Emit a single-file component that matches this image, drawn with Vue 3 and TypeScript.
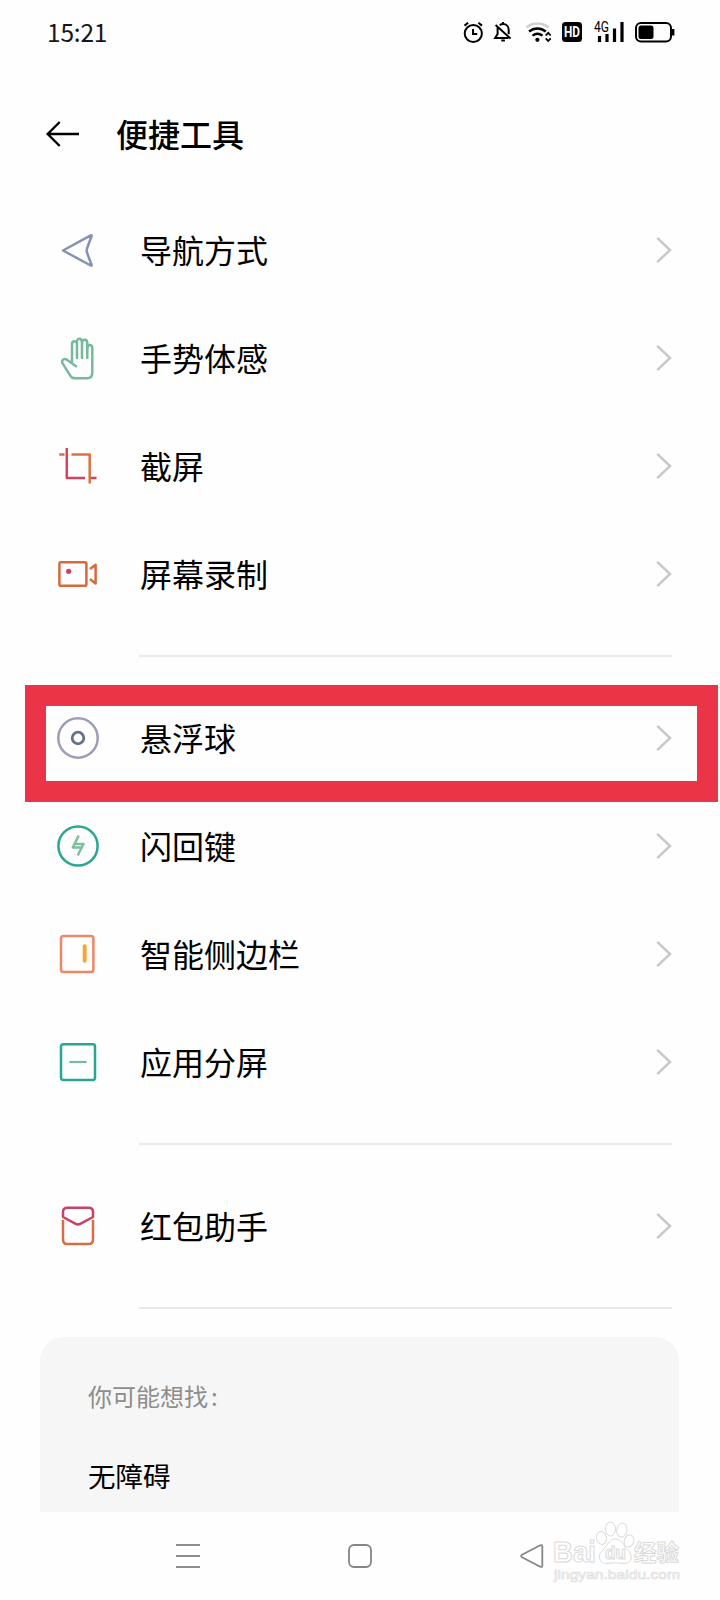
<script setup lang="ts">
interface Item {
  icon: string
  label: string
}

const groups: Item[][] = [
  [
    { icon: 'nav', label: '导航方式' },
    { icon: 'hand', label: '手势体感' },
    { icon: 'crop', label: '截屏' },
    { icon: 'record', label: '屏幕录制' },
  ],
  [
    { icon: 'orb', label: '悬浮球' },
    { icon: 'flash', label: '闪回键' },
    { icon: 'sidebar', label: '智能侧边栏' },
    { icon: 'split', label: '应用分屏' },
  ],
  [{ icon: 'packet', label: '红包助手' }],
]
</script>

<template>
  <div class="screen">
    <header class="status">
      <span class="time">15:21</span>
      <svg class="status-icons" viewBox="460 18 218 28" width="218" height="28" fill="none" stroke="#000" stroke-width="2">
        <circle cx="473.3" cy="33.5" r="8.6" />
        <path d="M473 29v5h4.2M464.5 25.6l3.6-2.8M482 25.6l-3.6-2.8" />
        <path d="M497.6 27.4V34l-2.5 4h13.4M499.8 25.3c1-.9 2-1.200 3.200-1.200 3.400 0 5.700 2.400 5.700 5.700v4.400M503 22v2.500M495.600 25l15 13.600M501.300 40.400h3.600" />
        <path d="M526.5 27.4c6.400-5.200 15.600-5.200 22 0" stroke="#d0d0d0" stroke-width="2.6" />
        <path d="M529 31.5c5-4.100 11.800-4.100 16.800 0" stroke-width="2.4" />
        <path d="M532.5 35.6c3-2.200 7-2.200 10 0" stroke-width="2.4" />
        <circle cx="537.4" cy="39.8" r="2.1" fill="#000" stroke="none" />
        <path d="M545.7 35.5l2.500-2.700 2.500 2.700M545.700 38.300l2.500 2.700 2.500-2.700" stroke-width="1.8" />
        <rect x="562" y="22" width="20" height="20" rx="3.5" fill="#000" stroke="none" />
        <text class="hd" x="564" y="37" textLength="16" lengthAdjust="spacingAndGlyphs">HD</text>
        <text class="net" x="594" y="32" textLength="15" lengthAdjust="spacingAndGlyphs">4G</text>
        <path d="M599.5 36v6M607 34v8M614.5 28.500V42M622 22v20" stroke-width="3.2" />
        <rect x="636" y="23" width="35" height="18.4" rx="5" />
        <rect x="638.5" y="25.5" width="15" height="13.4" rx="2.5" fill="#000" stroke="none" />
        <path d="M673.2 29v6.500" stroke-width="2.4" />
      </svg>
    </header>

    <div class="titlebar">
      <svg width="34" height="28" viewBox="0 0 34 28" fill="none" stroke="#000" stroke-width="2.4">
        <path d="M13.700 2L1.700 14l12 12M1.700 14H33" />
      </svg>
      <h1>便捷工具</h1>
    </div>

    <main>
      <section v-for="(group, g) in groups" :key="g" class="group">
        <div v-for="item in group" :key="item.icon" class="row">
          <svg class="icon" viewBox="0 0 44 44" width="44" height="44" fill="none" stroke-width="2.5" stroke-linejoin="round">
            <path v-if="item.icon === 'nav'" stroke="#8791b3" d="M7 22.500L34.700 7.400q1.200-.4.8.8L31 20.500q-.6 2 0 4l4.500 12.300q.4 1.300-.8.7z" />
            <g v-else-if="item.icon === 'hand'" stroke="#76b99b" stroke-linecap="round">
              <path d="M20 30.200l-9-6.500c-3-2-6 .7-4.400 3.600l7.500 12q1.700 3 4.700 3H31q5.300 0 5.300-5.500V12.500q0-3.500-2.500-3.500t-2.500 3.500" />
              <path d="M16 26V8q0-2.800 2.500-2.800T21 8v14M21 7q-.2-4.300 2.300-4.300T26 7v15M26 7q0-3.200 2.600-3.200T31.300 7v15" />
            </g>
            <g v-else-if="item.icon === 'crop'">
              <path stroke="#cd4562" d="M10.800 4v30H29M34.500 34h6" />
              <path stroke="#dc7044" d="M3.300 10.400H8.600M15.500 10.400h18.200v29" />
            </g>
            <g v-else-if="item.icon === 'record'" stroke="#d8693f">
              <rect x="3.4" y="10.2" width="27" height="23.6" rx="1.6" />
              <path d="M34 17l5.600-4.200v18.800L34 27" />
              <circle cx="12.700" cy="19.300" r="2.6" fill="#cd3f66" stroke="none" />
            </g>
            <g v-else-if="item.icon === 'orb'">
              <circle cx="22" cy="22" r="19.700" stroke="#9c9eb9" />
              <circle cx="22" cy="22" r="5.800" stroke="#637189" stroke-width="2.800" />
            </g>
            <g v-else-if="item.icon === 'flash'">
              <circle cx="22" cy="22" r="19.600" stroke="#2aa693" stroke-width="2.500" />
              <path stroke="#7dbf9f" d="M22.700 11.500L16.800 23.500H26M18.500 20h9L21.700 31.500" />
            </g>
            <g v-else-if="item.icon === 'sidebar'">
              <rect x="5" y="4" width="32.4" height="36" rx="2.6" stroke="#ed8768" />
              <path stroke="#f4a63a" stroke-width="4" stroke-linecap="round" d="M28.700 14.300v14.500" />
            </g>
            <g v-else-if="item.icon === 'split'">
              <rect x="5" y="4.2" width="34" height="35.8" rx="2.2" stroke="#28a693" />
              <path stroke="#72bba0" stroke-width="2.200" d="M13.300 22h17.400" />
            </g>
            <g v-else>
              <path stroke="#cb4260" d="M7 13V8q0-4.300 4.300-4.300h21.400Q37 3.700 37 8v5L24.300 19.800q-2.300 1.200-4.600 0z" />
              <path stroke="#d76d45" d="M7 16v19.500q0 4.500 4.300 4.500h21.400q4.300 0 4.300-4.500V16" />
            </g>
          </svg>
          <span class="label">{{ item.label }}</span>
          <svg class="chevron" viewBox="0 0 16 28" width="16" height="28" fill="none" stroke="#c8c8c8" stroke-width="2.500">
            <path d="M1.200 1.800L14 14L1.200 26.200" />
          </svg>
          <div v-if="item.icon === 'orb'" class="frame"></div>
        </div>
        <div class="divider"></div>
      </section>
    </main>

    <aside class="card">
      <p class="hint">你可能想找<span class="colon">:</span></p>
      <p class="link">无障碍</p>
    </aside>

    <footer class="navbar">
      <svg width="24" height="24" viewBox="0 0 24 24" stroke="#8d8d8d" stroke-width="2">
        <path d="M0 1h24M0 12h24M0 23h24" />
      </svg>
      <svg width="24" height="24" viewBox="0 0 24 24" fill="none" stroke="#858585" stroke-width="1.800">
        <rect x="1" y="1" width="22" height="22" rx="5" />
      </svg>
      <svg width="24" height="24" viewBox="0 0 24 24" fill="none" stroke="#858585" stroke-width="1.800" stroke-linejoin="round">
        <path d="M2 10.700L20.300 1.300q2-.8 2 1.200v19q0 2-2 1.200L2 13.300q-1.600-1.300 0-2.600z" />
      </svg>
    </footer>

    <svg class="watermark" viewBox="0 0 134 66" width="134" height="66" fill="#fff" stroke="#dadada" stroke-width="1">
      <text class="brand" x="3" y="42" textLength="43" lengthAdjust="spacingAndGlyphs">Bai</text>
      <ellipse cx="51.500" cy="18" rx="5" ry="6.500" transform="rotate(-12 51.500 18)" />
      <ellipse cx="60.500" cy="9" rx="5" ry="7" />
      <ellipse cx="71.800" cy="10" rx="5" ry="7" transform="rotate(10 71.800 10)" />
      <ellipse cx="79" cy="21" rx="4.800" ry="6.200" transform="rotate(18 79 21)" />
      <path d="M65.500 19c-7 0-8 7-12.500 11-7 6-3 14 4 13.500 3-.2 5-.7 8.500-.7s6 .7 9 .7c7 .2 9.500-8 3-13.500C73 26 72.500 19 65.500 19z" />
      <text class="du" x="55" y="39" textLength="21" lengthAdjust="spacingAndGlyphs">du</text>
      <text class="exp" x="84" y="41" textLength="45" lengthAdjust="spacingAndGlyphs">经验</text>
      <text class="site" x="4" y="59" textLength="126" lengthAdjust="spacingAndGlyphs">jingyan.baidu.com</text>
    </svg>
  </div>
</template>

<style>
body {
  background: #fefefe;
}
</style>

<style scoped>
.screen {
  position: relative;
  width: 720px;
  height: 1600px;
  overflow: hidden;
  display: flex;
  flex-direction: column;
  background: #fefefe;
  color: #000;
  font-family: "Noto Sans CJK SC", sans-serif;
}
.status {
  height: 64px;
  flex: none;
  display: flex;
  align-items: center;
  justify-content: space-between;
  padding: 0 42px 0 47px;
}
.time {
  font-size: 24.5px;
  line-height: 36px;
  letter-spacing: -0.2px;
  padding-bottom: 1px;
  color: #161616;
}
.hd {
  font: bold 14px Roboto, sans-serif;
  fill: #fff;
  stroke: none;
}
.net {
  font: 14px Roboto, sans-serif;
  fill: #000;
  stroke: none;
}
.titlebar {
  height: 132px;
  flex: none;
  box-sizing: border-box;
  display: flex;
  align-items: center;
  gap: 36px;
  padding: 8px 0 0 46px;
}
h1 {
  margin: 0;
  padding-bottom: 2px;
  font-size: 32px;
  line-height: 48px;
  font-weight: 500;
}
.row {
  position: relative;
  height: 108px;
  display: flex;
  align-items: center;
  padding: 0 48px 0 56px;
}
.label {
  flex: 1;
  margin-left: 40px;
  padding-bottom: 2px;
  font-size: 32px;
  line-height: 48px;
}
.divider {
  height: 2px;
  margin: 27px 48px 27px 139px;
  background: #e9e9e9;
}
.frame {
  position: absolute;
  left: 25px;
  top: 1px;
  width: 693px;
  height: 117px;
  box-sizing: border-box;
  border: 21px solid #eb3547;
  z-index: 1;
}
.card {
  height: 175px;
  flex: none;
  box-sizing: border-box;
  margin: 1px 41px 0 40px;
  padding: 39px 48px 0;
  border-radius: 24px 24px 0 0;
  background: #f6f6f6;
}
.card p {
  margin: 0;
}
.hint {
  font-size: 24px;
  line-height: 40px;
  color: #8d8d8d;
}
.colon {
  margin-left: 3px;
}
.link {
  font-size: 27.5px;
  line-height: 40px;
  padding-top: 39px;
}
.navbar {
  flex: 1;
  display: flex;
  align-items: center;
  justify-content: space-between;
  padding: 0 176px;
}
.watermark {
  position: absolute;
  left: 550px;
  top: 1520px;
}
.brand {
  font: bold 29px "Liberation Sans", sans-serif;
}
.du {
  font: bold 18px "Liberation Sans", sans-serif;
}
.exp {
  font: bold 23px "Noto Sans CJK SC", sans-serif;
}
.site {
  font: 13px "Liberation Sans", sans-serif;
  stroke: #dedede;
  stroke-width: 0.7;
}
</style>
